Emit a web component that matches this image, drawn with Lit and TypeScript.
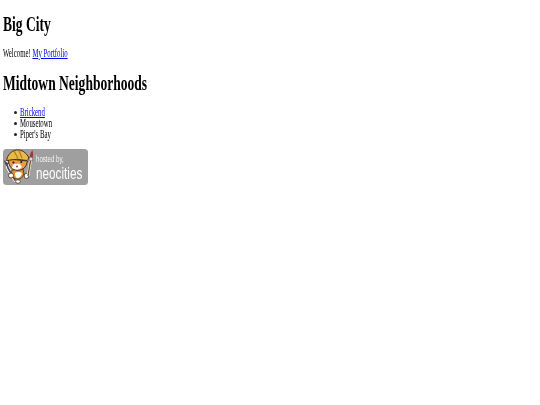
import { LitElement, html, css } from "lit";
import { customElement } from "lit/decorators.js";

@customElement("app-root")
export class AppRoot extends LitElement {
  static styles = css`
    :host {
      display: block;
      min-height: 405px;
      background: #fff;
      color: #000;
      font-family: "Liberation Serif", "Times New Roman", serif;
      font-size: 11.5px;
      line-height: 11px;
      overflow: hidden;
    }
    .page {
      display: flex;
      flex-direction: column;
      align-items: flex-start;
      padding: 12px 3px 0;
      filter: blur(0.3px);
    }
    h1 {
      margin: 0;
      font-size: 21px;
      line-height: 24px;
      font-weight: 700;
    }
    h1 .s { transform: scaleX(0.645); }
    p {
      margin: 12px 0 0;
      height: 11px;
    }
    .s {
      display: inline-block;
      white-space: nowrap;
      transform: scaleX(0.59);
      transform-origin: left center;
    }
    .h2 { margin-top: 12px; }
    a { color: #0000ee; text-decoration: underline; }
    ul {
      margin: 12px 0 0;
      padding: 0 0 0 17px;
      list-style: none;
    }
    li {
      position: relative;
      height: 11px;
    }
    li::before {
      content: "";
      position: absolute;
      left: -6px;
      top: 4px;
      width: 3px;
      height: 3px;
      border-radius: 50%;
      background: #222;
    }
    .badge {
      display: block;
      margin-top: 9px;
      width: 85px;
      height: 36px;
    }
    .hosted { font: 9px "Liberation Sans", Arial, sans-serif; fill: #f4f4f4; }
    .neo { font: 17px "Liberation Sans", Arial, sans-serif; fill: #fff; }
  `;

  render() {
    return html`
      <div class="page">
        <h1><span class="s">Big City</span></h1>
        <p><span class="s">Welcome! <a href="#">My Portfolio</a></span></p>
        <h1 class="h2"><span class="s">Midtown Neighborhoods</span></h1>
        <ul>
          <li><span class="s"><a href="#">Brickend</a></span></li>
          <li><span class="s">Mousetown</span></li>
          <li><span class="s">Piper's Bay</span></li>
        </ul>
        <svg class="badge" viewBox="0 0 85 36" xmlns="http://www.w3.org/2000/svg">
          <rect width="85" height="36" rx="3.5" fill="#9f9f9f" />
          <!-- wrench -->
          <path d="M3.5 14 L5 19 L12 31" fill="none" stroke="#fff" stroke-width="3.4" stroke-linecap="round" />
          <path d="M3.5 14 L5 19 L12 31" fill="none" stroke="#4d4d4d" stroke-width="1.8" stroke-linecap="round" />
          <path d="M1.5 11.5 L3.2 16 L6.5 13" fill="none" stroke="#4d4d4d" stroke-width="1.4" />
          <!-- body and feet -->
          <path d="M9 21 Q7 28 13 30 Q19 31 21 25 L20 20 Z" fill="#e8902e" stroke="#3f2c18" stroke-width="0.8" />
          <path d="M12 24 Q15 22 19 24 Q18 29 14 29 Q12 28 12 24 Z" fill="#fff" />
          <circle cx="8" cy="26.5" r="2.5" fill="#fff" stroke="#3f2c18" stroke-width="0.8" />
          <ellipse cx="15" cy="32.5" rx="2.4" ry="1.8" fill="#fff" stroke="#3f2c18" stroke-width="0.7" />
          <ellipse cx="23.5" cy="27" rx="2.3" ry="2.6" fill="#fff" stroke="#3f2c18" stroke-width="0.8" />
          <!-- head -->
          <path d="M5.5 10 Q5 20 14 21.5 Q23 21.5 24.5 12 Z" fill="#ee9d3e" stroke="#3f2c18" stroke-width="0.9" />
          <path d="M9 19 Q10 13.5 13.5 15 Q17 13.5 19 18 Q15 22.5 9 19 Z" fill="#fff" />
          <circle cx="10.5" cy="13.5" r="1.1" fill="#1d1d1d" />
          <circle cx="18.3" cy="13" r="1.1" fill="#1d1d1d" />
          <circle cx="14" cy="17.5" r="1" fill="#8c3b2c" />
          <!-- helmet -->
          <path d="M3.5 11.5 Q5 3 13 1 Q21 0 25.5 8 Q26 10.5 24 11.5 Q14 9 3.5 11.5 Z" fill="#e9b94a" stroke="#3f2c18" stroke-width="0.9" />
          <path d="M11 2 L15 9.5 M16 1.5 L19 9" stroke="#a87a1a" stroke-width="1.1" />
          <!-- brush -->
          <path d="M25 27 L27.6 11" stroke="#fff" stroke-width="2.6" />
          <path d="M25 27 L27.6 11" stroke="#7a5a30" stroke-width="1.5" />
          <path d="M26 11.5 L29.4 12 L29.8 8.5 L26.6 8 Z" fill="#ddd" stroke="#3f2c18" stroke-width="0.4" />
          <path d="M26.6 8 Q27 3.5 29.5 1 Q30.6 5 29.8 8.5 Z" fill="#a5382e" />
          <!-- text -->
          <text class="hosted" transform="translate(33 13) scale(0.68 1)">hosted by,</text>
          <text class="neo" transform="translate(33 29.5) scale(0.69 1)">neocities</text>
        </svg>
      </div>
    `;
  }
}
